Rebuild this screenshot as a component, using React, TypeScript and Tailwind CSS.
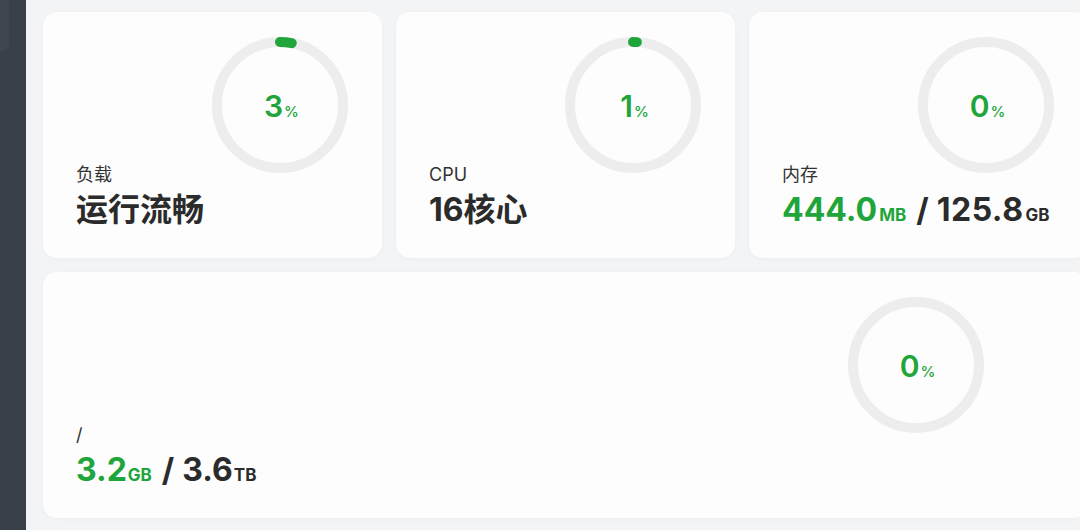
import React from "react";

const GREEN = "#20a53a";

function Ring({ pct }: { pct: number }) {
  const r = 63;
  const c = 2 * Math.PI * r;
  return (
    <div className="relative w-[136px] h-[136px] shrink-0">
      <svg width="136" height="136" viewBox="0 0 136 136" className="absolute inset-0">
        <circle cx="68" cy="68" r={r} fill="none" stroke="#ededed" strokeWidth="10" />
        {pct > 0 && (
          <circle
            cx="68"
            cy="68"
            r={r}
            fill="none"
            stroke={GREEN}
            strokeWidth="10"
            strokeLinecap="round"
            strokeDasharray={`${(c * pct) / 100} ${c}`}
            transform="rotate(-90 68 68)"
          />
        )}
      </svg>
      <div className="absolute inset-0 flex items-center justify-center pl-[3px] pt-[2px]">
        <span className="text-[#20a53a] text-[30px] font-semibold leading-none">{pct}</span>
        <span className="text-[#20a53a] text-[15px] font-medium leading-none self-center mt-[10px] ml-[1px]">%</span>
      </div>
    </div>
  );
}

function Card({
  pct,
  label,
  children,
  className,
  ringMargin,
}: {
  pct: number;
  label: string;
  children: React.ReactNode;
  className?: string;
  ringMargin: string;
}) {
  return (
    <div
      className={
        "h-[246px] bg-[#fdfdfd] rounded-[14px] shadow-[0_1px_4px_rgba(0,0,0,0.03)] grid grid-cols-1 grid-rows-1 pl-[33px] pt-[25px] " +
        (className ?? "")
      }
    >
      <div className="col-start-1 row-start-1 flex flex-col justify-end pb-[30px]">
        <div className="text-[18px] leading-[22px] text-[#333333]">{label}</div>
        <div className="mt-[6px] h-[36px] text-[32px] leading-[36px] font-bold text-[#2b2b2b] whitespace-nowrap">{children}</div>
      </div>
      <div className={"col-start-1 row-start-1 justify-self-end self-start " + ringMargin}>
        <Ring pct={pct} />
      </div>
    </div>
  );
}

export default function App() {
  return (
    <div
      className="w-[1080px] h-[530px] overflow-hidden flex bg-[#f3f4f5]"
      style={{ fontFamily: '"Inter", "Noto Sans CJK SC", sans-serif' }}
    >
      <div className="w-[26px] shrink-0 bg-[#39404a]">
        <div className="w-[9px] h-[52px] bg-[#3f4650] rounded-br-[8px]" />
      </div>
      <div className="pl-[17px] pt-[12px] shrink-0">
        <div className="grid grid-cols-[339px_339px_339px] gap-[14px] w-[1045px]">
          <Card pct={3} label="负载" ringMargin="mr-[34px]">
            <span>运行流畅</span>
          </Card>
          <Card pct={1} label="CPU" ringMargin="mr-[34px]">
            <span>16核心</span>
          </Card>
          <Card pct={0} label="内存" ringMargin="mr-[34px]">
            <span className="text-[#20a53a]">444.0</span>
            <span className="text-[#20a53a] text-[17px] leading-none ml-[2px]">MB</span>
            <span className="ml-[10px] mr-[8px]">/</span>
            <span className="tracking-[0.5px]">125.8</span>
            <span className="text-[17px] leading-none ml-[2px]">GB</span>
          </Card>
          <Card pct={0} label="/" className="col-span-3" ringMargin="mr-[104px]">
            <span className="text-[#20a53a]">3.2</span>
            <span className="text-[#20a53a] text-[17px] leading-none ml-[1px]">GB</span>
            <span className="ml-[10px] mr-[8px]">/</span>
            <span>3.6</span>
            <span className="text-[17px] leading-none ml-[1px]">TB</span>
          </Card>
        </div>
      </div>
    </div>
  );
}
